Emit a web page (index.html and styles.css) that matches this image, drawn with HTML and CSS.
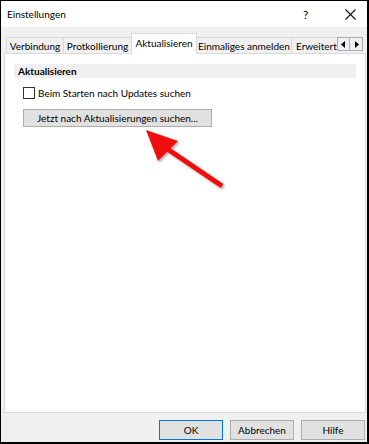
FILE: index.html
```html
<!DOCTYPE html>
<html>
<head>
<meta charset="utf-8">
<link rel="stylesheet" href="styles.css">
</head>
<body>
<div class="window">
  <div class="titlebar">
    <span class="title">Einstellungen</span>
    <span class="help">?</span>
    <span class="close">
      <svg width="11" height="11" viewBox="0 0 11 11"><path d="M0.5 0.5 L10.5 10.5 M10.5 0.5 L0.5 10.5" stroke="#111" stroke-width="1.1" fill="none"/></svg>
    </span>
  </div>
  <div class="body">
    <div class="tabs">
      <div class="tab t1">Verbindung</div>
      <div class="tab t2">Protkollierung</div>
      <div class="tab t3 active">Aktualisieren</div>
      <div class="tab t4">Einmaliges anmelden</div>
      <div class="tab t5">Erweitert</div>
      <div class="scroll">
        <div class="sbtn"><svg width="5" height="7" viewBox="0 0 5 7"><path d="M4 0 L0 3.5 L4 7 Z" fill="#000"/></svg></div>
        <div class="sbtn"><svg width="5" height="7" viewBox="0 0 5 7"><path d="M1 0 L5 3.5 L1 7 Z" fill="#000"/></svg></div>
      </div>
    </div>
    <div class="panel">
      <div class="section">Aktualisieren</div>
      <label class="check"><span class="box"></span><span>Beim Starten nach Updates suchen</span></label>
      <div class="btn search">Jetzt nach Aktualisierungen suchen...</div>
    </div>
    <div class="footer">
      <div class="btn fbtn default">OK</div>
      <div class="btn fbtn">Abbrechen</div>
      <div class="btn fbtn">Hilfe</div>
    </div>
  </div>
  <svg class="arrow" width="369" height="444" viewBox="0 0 369 444">
    <defs>
      <filter id="sh" x="-20%" y="-20%" width="140%" height="140%">
        <feDropShadow dx="1.5" dy="1.5" stdDeviation="1.2" flood-color="#000" flood-opacity="0.35"/>
      </filter>
    </defs>
    <g filter="url(#sh)">
      <line x1="222" y1="186" x2="163" y2="146" stroke="#f01010" stroke-width="5"/>
      <polygon points="146,130 178,141 158,161" fill="#f01010"/>
    </g>
  </svg>
</div>
</body>
</html>
```
FILE: styles.css
```css
* { box-sizing: border-box; }
html, body { margin: 0; padding: 0; }
body {
  font-family: Lato, "Liberation Sans", sans-serif;
  font-size: 10px;
  color: #000;
  background: #fff;
}
.window {
  position: relative;
  width: 369px;
  height: 444px;
  border-top: 1px solid #000;
  border-left: 1px solid #000;
  border-right: 2px solid #000;
  border-bottom: 2px solid #000;
  display: flex;
  flex-direction: column;
  overflow: hidden;
}
.titlebar {
  height: 26px;
  background: #fff;
  display: flex;
  align-items: center;
  padding-left: 6px;
  font-size: 10px;
}
.title { flex: 1; }
.help { width: 12px; margin-right: 30px; font-size: 12px; }
.close { width: 11px; margin-right: 11px; display: flex; }
.body {
  flex: 1;
  background: #f0f0f0;
  display: flex;
  flex-direction: column;
  padding: 6px 1px 0 3px;
}
.tabs {
  display: flex;
  align-items: flex-end;
  height: 20px;
  padding-left: 2px;
  position: relative;
  z-index: 1;
}
.tab {
  height: 16px;
  border: 1px solid #d9d9d9;
  border-bottom: none;
  border-right: none;
  background: #f0f0f0;
  display: flex;
  align-items: center;
  justify-content: center;
  white-space: nowrap;
  overflow: hidden;
  flex-shrink: 0;
}
.t1 { width: 57px; }
.t2 { width: 68px; }
.t3 { width: 66px; }
.t4 { width: 94px; }
.t5 { width: 46px; justify-content: flex-start; padding-left: 4px; }
.tab.active {
  height: 21px;
  background: #fff;
  border-right: 1px solid #d9d9d9;
  margin-bottom: -1px;
  padding-bottom: 3px;
}
.tab.active + .tab { border-left: none; }
.scroll {
  display: flex;
  height: 14px;
  margin-bottom: 2px;
  flex-shrink: 0;
}
.sbtn {
  width: 13px;
  height: 14px;
  border: 1px solid #adadad;
  background: #f0f0f0;
  display: flex;
  align-items: center;
  justify-content: center;
}
.sbtn + .sbtn { border-left: none; }
.panel {
  height: 360px;
  background: #fff;
  border: 1px solid #d9d9d9;
  padding: 10px 9px 0 9px;
  display: flex;
  flex-direction: column;
  align-items: flex-start;
}
.section {
  align-self: stretch;
  background: #f0f0f0;
  height: 14px;
  font-weight: bold;
  padding-left: 4px;
  display: flex;
  align-items: center;
}
.check {
  display: flex;
  align-items: center;
  margin: 9px 0 0 9px;
  gap: 3px;
}
.box {
  width: 12px;
  height: 12px;
  border: 1px solid #333;
  background: #fff;
}
.btn {
  background: #e1e1e1;
  border: 1px solid #adadad;
  display: flex;
  align-items: center;
  justify-content: center;
}
.search {
  margin: 10px 0 0 9px;
  width: 189px;
  height: 18px;
}
.footer {
  flex: 1;
  display: flex;
  justify-content: flex-end;
  align-items: center;
  gap: 7px;
  padding-right: 1px;
  padding-top: 4px;
}
.fbtn {
  width: 64px;
  height: 20px;
}
.fbtn.default { border-color: #0078d7; }
.arrow {
  position: absolute;
  left: -1px;
  top: -1px;
  pointer-events: none;
}
```
